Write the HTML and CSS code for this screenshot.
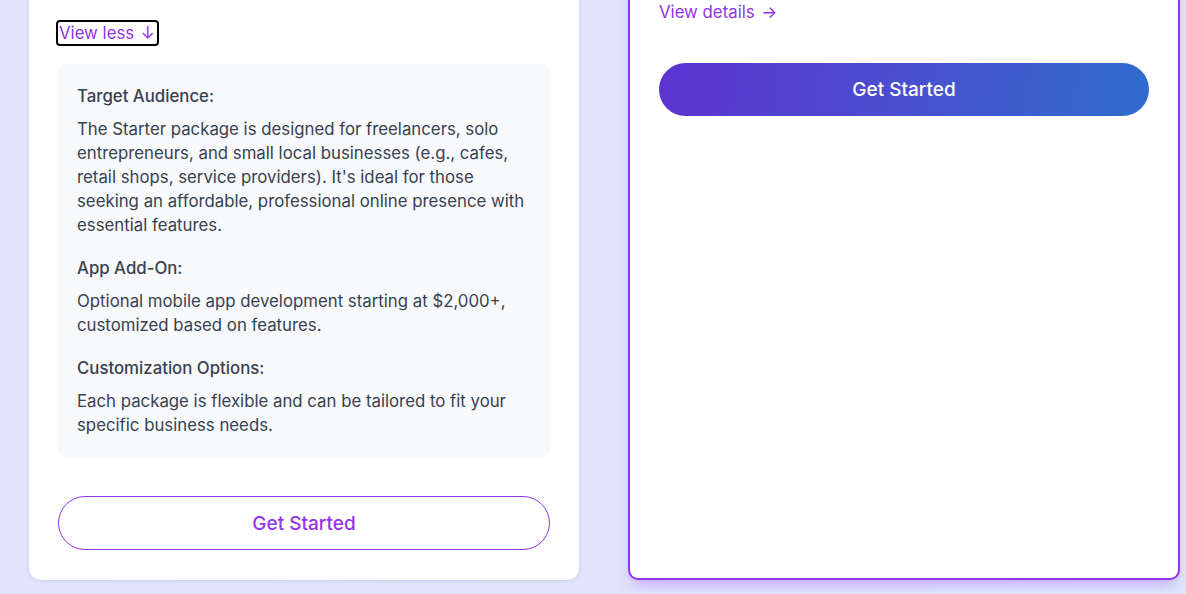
FILE: index.html
```html
<!DOCTYPE html>
<html lang="en">
<head>
<meta charset="utf-8">
<title>Pricing</title>
<link rel="stylesheet" href="styles.css">
</head>
<body>
<main class="page">
  <section class="plans">
    <article class="card">
      <button class="toggle" type="button">View less <span class="arrow">↓</span></button>
      <div class="details">
        <div class="block">
          <h4>Target Audience:</h4>
          <p>The Starter package is designed for freelancers, solo entrepreneurs, and small local businesses (e.g., cafes, retail shops, service providers). It's ideal for those seeking an affordable, professional online presence with essential features.</p>
        </div>
        <div class="block">
          <h4>App Add-On:</h4>
          <p>Optional mobile app development starting at $2,000+, customized based on features.</p>
        </div>
        <div class="block">
          <h4>Customization Options:</h4>
          <p>Each package is flexible and can be tailored to fit your specific business needs.</p>
        </div>
      </div>
      <a class="btn btn-outline" href="#">Get Started</a>
    </article>
    <article class="card card-featured">
      <a class="more" href="#">View details <span class="arrow">→</span></a>
      <a class="btn btn-fill" href="#">Get Started</a>
    </article>
  </section>
</main>
</body>
</html>
```

FILE: styles.css
```css
* { box-sizing: border-box; }
html, body { margin: 0; padding: 0; }
body {
  font-family: Inter, "Noto Sans", "Liberation Sans", sans-serif;
  background: linear-gradient(90deg, #e3e3fd 0%, #e0e4fc 50%, #dfe6fb 100%);
  height: 594px;
  overflow: hidden;
  color: #374151;
}
.page { padding: 0 6px 0 29px; }
.plans {
  display: grid;
  grid-template-columns: 550px 552px;
  column-gap: 49px;
  margin-top: -28px;
  align-items: stretch;
}
.card {
  background: #fff;
  border-radius: 12px;
  padding: 29px 29px 30px;
  box-shadow: 0 1px 3px rgba(60, 60, 120, 0.12);
  display: flex;
  flex-direction: column;
}
.card-featured {
  border: 2px solid #9333ea;
  border-radius: 10px;
  padding: 27px 29px 29px 29px;
  box-shadow: 0 8px 14px -4px rgba(147, 51, 234, 0.35);
}
.arrow { margin-left: 2px; }
.toggle {
  align-self: flex-start;
  margin: 21px 0 0 0;
  padding: 0 2px 0 1px;
  border: 0;
  background: none;
  font: inherit;
  font-size: 16.8px;
  line-height: 22px;
  height: 22px;
  color: #9333ea;
  outline: 2px solid #000;
  border-radius: 2px;
  cursor: pointer;
}
.details {
  margin-top: 20px;
  background: #f8f9fb;
  border-radius: 8px;
  padding: 20px 20px 20px 19px;
  display: flex;
  flex-direction: column;
  gap: 19px;
}
.details h4 {
  margin: 0 0 9px;
  font-size: 16.8px;
  line-height: 24px;
  font-weight: 500;
  color: #374151;
}
.details p {
  margin: 0;
  font-size: 16.8px;
  line-height: 24px;
  color: #374151;
}
.btn {
  display: flex;
  align-items: center;
  justify-content: center;
  height: 54px;
  border-radius: 999px;
  font-size: 19px;
  font-weight: 500;
  text-decoration: none;
}
.btn-outline {
  margin-top: 39px;
  border: 1px solid #9333ea;
  color: #9333ea;
  background: #fff;
}
.more {
  align-self: flex-start;
  margin-top: -1px;
  color: #9333ea;
  text-decoration: none;
  font-size: 16.8px;
  line-height: 24px;
}
.btn-fill {
  margin-top: 39px;
  height: 53px;
  color: #fff;
  background: linear-gradient(100deg, #5d33d0 0%, #4a4fcf 50%, #2f6ccd 100%);
}
```
